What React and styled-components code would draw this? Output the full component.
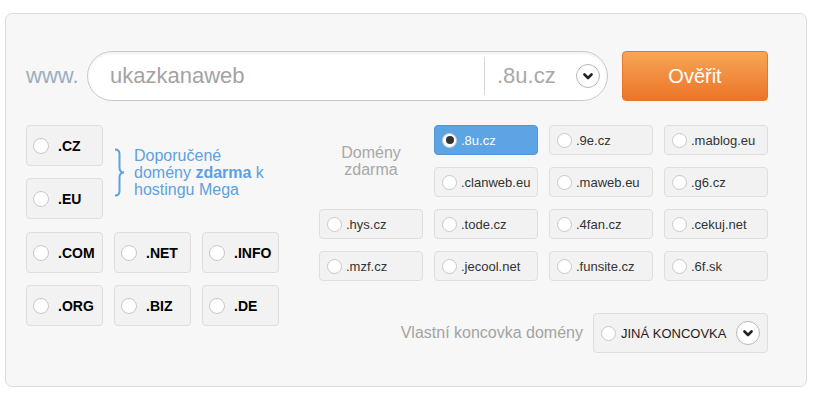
import React, { useState } from "react";
import styled, { createGlobalStyle, css } from "styled-components";

const GlobalStyle = createGlobalStyle`
  body {
    margin: 0;
    background: #fff;
    font-family: "Liberation Sans", Arial, sans-serif;
  }
`;

const Panel = styled.div`
  box-sizing: border-box;
  width: 802px;
  height: 374px;
  margin: 13px 0 0 5px;
  padding: 37px 38px 0 20px;
  background: #f7f7f7;
  border: 1px solid #dcdcdc;
  border-radius: 7px;
`;

const SearchRow = styled.div`
  display: flex;
  align-items: center;
  height: 50px;
`;

const Prefix = styled.span`
  width: 61px;
  font-size: 22px;
  color: #9dadc0;
`;

const SearchField = styled.div`
  box-sizing: border-box;
  width: 521px;
  height: 50px;
  display: flex;
  align-items: center;
  background: #fff;
  border: 1px solid #c9c9c9;
  border-radius: 25px;
  box-shadow: inset 0 2px 3px rgba(0, 0, 0, 0.06);
  padding: 0 7px 0 22px;
`;

const NameInput = styled.input`
  flex: 1;
  min-width: 0;
  height: 38px;
  border: 0;
  outline: none;
  background: transparent;
  font-family: inherit;
  font-size: 22px;
  color: #a3a3a3;
  padding: 0;
  border-right: 1px solid #d6d6d6;
`;

const Suffix = styled.span`
  width: 79px;
  padding-left: 12px;
  font-size: 22px;
  color: #a8a8a8;
`;

const DropCircle = styled.span`
  box-sizing: border-box;
  width: 24px;
  height: 24px;
  flex-shrink: 0;
  display: flex;
  align-items: center;
  justify-content: center;
  background: #fff;
  border: 1px solid #b8b8b8;
  border-radius: 50%;
`;

const CheckButton = styled.button`
  box-sizing: border-box;
  width: 146px;
  height: 50px;
  margin-left: 14px;
  border: 1px solid #e5772c;
  border-radius: 4px;
  background: linear-gradient(#f7a656, #ec7427);
  color: #fff;
  font-family: inherit;
  font-size: 20px;
  cursor: pointer;
`;

const Body = styled.div`
  display: flex;
  justify-content: space-between;
  margin-top: 24px;
`;

const LeftColumn = styled.div`
  width: 253px;
`;

const Featured = styled.div`
  display: flex;
  align-items: center;
`;

const Stack = styled.div`
  display: flex;
  flex-direction: column;
  gap: 12px;
`;

const Note = styled.p`
  margin: 0 0 0 9px;
  font-size: 16px;
  line-height: 17px;
  color: #5ea1e0;

  b {
    font-weight: bold;
  }
`;

const BigGrid = styled.div`
  display: grid;
  grid-template-columns: repeat(3, 77px);
  grid-auto-rows: 41px;
  gap: 12px 11px;
  margin-top: 13px;
`;

const Choice = styled.label`
  box-sizing: border-box;
  display: flex;
  align-items: center;
  white-space: nowrap;
  background: #f2f2f2;
  border: 1px solid #dedede;
  border-radius: 4px;
  cursor: pointer;
  color: #333;

  ${(p) =>
    p.$big
      ? css`
          width: 77px;
          height: 41px;
          padding-left: 6px;
          gap: 9px;
          font-size: 14px;
          font-weight: bold;
          color: #000;
        `
      : css`
          height: 30px;
          padding-left: 7px;
          gap: 4px;
          font-size: 13px;
        `}

  ${(p) =>
    p.$active &&
    css`
      background: #5ca4e3;
      border-color: #4f97d8;
      color: #fff;
    `}
`;

const Radio = styled.span`
  box-sizing: border-box;
  width: ${(p) => p.$size}px;
  height: ${(p) => p.$size}px;
  flex-shrink: 0;
  display: flex;
  align-items: center;
  justify-content: center;
  background: #fff;
  border: 1px solid #c8c8c8;
  border-radius: 50%;

  &::after {
    content: "";
    display: ${(p) => (p.$on ? "block" : "none")};
    width: 8px;
    height: 8px;
    border-radius: 50%;
    background: #333;
  }
`;

const RightColumn = styled.div`
  width: 449px;
`;

const FreeGrid = styled.div`
  display: grid;
  grid-template-columns: repeat(4, 104px);
  grid-auto-rows: 30px;
  gap: 12px 11px;
`;

const FreeLabel = styled.div`
  grid-row: 1 / span 2;
  display: flex;
  align-items: center;
  justify-content: center;
  text-align: center;
  font-size: 16px;
  line-height: 17px;
  color: #a8a8a8;
`;

const CustomRow = styled.div`
  display: flex;
  justify-content: flex-end;
  align-items: center;
  gap: 10px;
  margin-top: 32px;
`;

const CustomLabel = styled.span`
  font-size: 16px;
  color: #a3a3a3;
`;

const CustomBox = styled(Choice)`
  width: 175px;
  height: 40px;
  padding: 0 7px;
  font-size: 13px;
  color: #2b1a1a;
  gap: 5px;
`;

const Spacer = styled.span`
  flex: 1;
`;

const Chevron = () => (
  <svg width="10" height="7" viewBox="0 0 10 7">
    <polyline
      points="1.5,1.5 5,5 8.5,1.5"
      fill="none"
      stroke="#222"
      strokeWidth="2.6"
      strokeLinecap="round"
      strokeLinejoin="round"
    />
  </svg>
);

const Brace = () => (
  <svg width="11" height="49" viewBox="0 0 11 49" style={{ marginLeft: 11 }}>
    <path
      d="M1 1.5 Q5.5 1.5 5.5 6 L5.5 19.5 Q5.5 24.5 10 24.5 Q5.5 24.5 5.5 29.5 L5.5 43 Q5.5 47.5 1 47.5"
      fill="none"
      stroke="#5ea1e0"
      strokeWidth="2"
    />
  </svg>
);

const bigDomains = [".COM", ".NET", ".INFO", ".ORG", ".BIZ", ".DE"];

const freeDomains = [
  ".8u.cz", ".9e.cz", ".mablog.eu",
  ".clanweb.eu", ".maweb.eu", ".g6.cz",
  ".hys.cz", ".tode.cz", ".4fan.cz", ".cekuj.net",
  ".mzf.cz", ".jecool.net", ".funsite.cz", ".6f.sk",
];

const App = () => {
  const [selected, setSelected] = useState(".8u.cz");

  return (
    <>
      <GlobalStyle />
      <Panel>
        <SearchRow>
          <Prefix>www.</Prefix>
          <SearchField>
            <NameInput defaultValue="ukazkanaweb" />
            <Suffix>{selected}</Suffix>
            <DropCircle>
              <Chevron />
            </DropCircle>
          </SearchField>
          <CheckButton>Ověřit</CheckButton>
        </SearchRow>

        <Body>
          <LeftColumn>
            <Featured>
              <Stack>
                {[".CZ", ".EU"].map((d) => (
                  <Choice key={d} $big onClick={() => setSelected(d)}>
                    <Radio $size={16} $on={selected === d} />
                    {d}
                  </Choice>
                ))}
              </Stack>
              <Brace />
              <Note>
                Doporučené
                <br />
                domény <b>zdarma</b> k
                <br />
                hostingu Mega
              </Note>
            </Featured>
            <BigGrid>
              {bigDomains.map((d) => (
                <Choice key={d} $big onClick={() => setSelected(d)}>
                  <Radio $size={16} $on={selected === d} />
                  {d}
                </Choice>
              ))}
            </BigGrid>
          </LeftColumn>

          <RightColumn>
            <FreeGrid>
              <FreeLabel>
                Domény
                <br />
                zdarma
              </FreeLabel>
              {freeDomains.map((d) => (
                <Choice
                  key={d}
                  $active={selected === d}
                  onClick={() => setSelected(d)}
                >
                  <Radio $size={15} $on={selected === d} />
                  {d}
                </Choice>
              ))}
            </FreeGrid>
            <CustomRow>
              <CustomLabel>Vlastní koncovka domény</CustomLabel>
              <CustomBox>
                <Radio $size={15} />
                JINÁ KONCOVKA
                <Spacer />
                <DropCircle>
                  <Chevron />
                </DropCircle>
              </CustomBox>
            </CustomRow>
          </RightColumn>
        </Body>
      </Panel>
    </>
  );
};

export default App;
